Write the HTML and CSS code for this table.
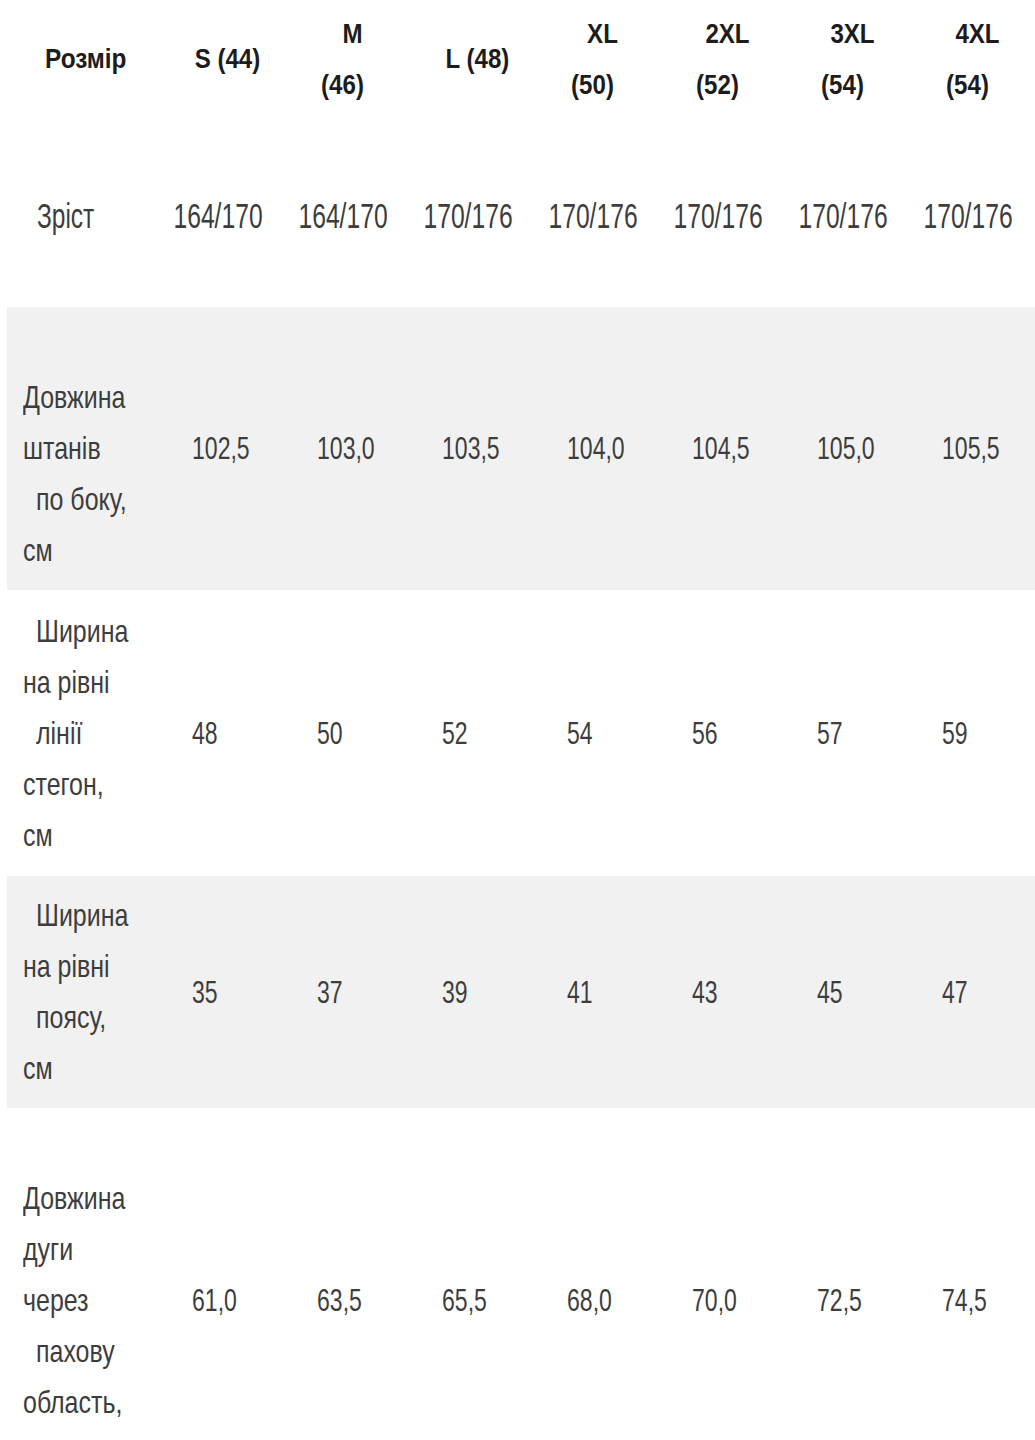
FILE: index.html
```html
<!DOCTYPE html>
<html lang="uk">
<head>
<meta charset="utf-8">
<link rel="stylesheet" href="styles.css">
</head>
<body>
<table class="sizes">
  <colgroup>
    <col class="c-label"><col class="c-val"><col class="c-val"><col class="c-val"><col class="c-val"><col class="c-val"><col class="c-val"><col class="c-last">
  </colgroup>
  <thead>
    <tr class="head">
      <th class="lbl"><span class="ln p-h">Розмір</span></th>
      <th><span class="ln l1">S (44)</span></th>
      <th><span class="ln l1">M</span><span class="ln">(46)</span></th>
      <th><span class="ln l1">L (48)</span></th>
      <th><span class="ln l1">XL</span><span class="ln">(50)</span></th>
      <th><span class="ln l1">2XL</span><span class="ln">(52)</span></th>
      <th><span class="ln l1">3XL</span><span class="ln">(54)</span></th>
      <th><span class="ln l1">4XL</span><span class="ln">(54)</span></th>
    </tr>
  </thead>
  <tbody>
    <tr class="height">
      <td class="lbl"><span class="ln p-z">Зріст</span></td>
      <td class="ctr"><span class="ln">164/170</span></td>
      <td class="ctr"><span class="ln">164/170</span></td>
      <td class="ctr"><span class="ln">170/176</span></td>
      <td class="ctr"><span class="ln">170/176</span></td>
      <td class="ctr"><span class="ln">170/176</span></td>
      <td class="ctr"><span class="ln">170/176</span></td>
      <td class="ctr"><span class="ln">170/176</span></td>
    </tr>
    <tr class="shade">
      <td class="lbl"><span class="ln">&nbsp;</span><span class="ln">Довжина</span><span class="ln">штанів</span><span class="ln ind">по боку,</span><span class="ln">см</span></td>
      <td><span class="ln">102,5</span></td>
      <td><span class="ln">103,0</span></td>
      <td><span class="ln">103,5</span></td>
      <td><span class="ln">104,0</span></td>
      <td><span class="ln">104,5</span></td>
      <td><span class="ln">105,0</span></td>
      <td><span class="ln">105,5</span></td>
    </tr>
    <tr class="tall">
      <td class="lbl"><span class="ln ind">Ширина</span><span class="ln">на рівні</span><span class="ln ind">лінії</span><span class="ln">стегон,</span><span class="ln">см</span></td>
      <td><span class="ln">48</span></td>
      <td><span class="ln">50</span></td>
      <td><span class="ln">52</span></td>
      <td><span class="ln">54</span></td>
      <td><span class="ln">56</span></td>
      <td><span class="ln">57</span></td>
      <td><span class="ln">59</span></td>
    </tr>
    <tr class="shade">
      <td class="lbl"><span class="ln ind">Ширина</span><span class="ln">на рівні</span><span class="ln ind">поясу,</span><span class="ln">см</span></td>
      <td><span class="ln">35</span></td>
      <td><span class="ln">37</span></td>
      <td><span class="ln">39</span></td>
      <td><span class="ln">41</span></td>
      <td><span class="ln">43</span></td>
      <td><span class="ln">45</span></td>
      <td><span class="ln">47</span></td>
    </tr>
    <tr>
      <td class="lbl"><span class="ln">&nbsp;</span><span class="ln">Довжина</span><span class="ln">дуги</span><span class="ln">через</span><span class="ln ind">пахову</span><span class="ln">область,</span><span class="ln">см</span></td>
      <td><span class="ln">61,0</span></td>
      <td><span class="ln">63,5</span></td>
      <td><span class="ln">65,5</span></td>
      <td><span class="ln">68,0</span></td>
      <td><span class="ln">70,0</span></td>
      <td><span class="ln">72,5</span></td>
      <td><span class="ln">74,5</span></td>
    </tr>
  </tbody>
</table>
</body>
</html>
```
FILE: styles.css
```css
html, body {
  margin: 0;
  padding: 0;
  background: #ffffff;
}
body {
  font-family: "Liberation Sans", Arial, sans-serif;
  font-size: 32px;
  color: #3d3d3d;
}
.sizes {
  margin-left: 7px;
  width: 1028px;
  table-layout: fixed;
  border-collapse: collapse;
}
.c-label { width: 147.5px; }
.c-val { width: 125px; }
.c-last { width: 130.5px; }
.sizes th,
.sizes td {
  padding: 14px 0 14px 37.5px;
  line-height: 51px;
  vertical-align: middle;
  text-align: left;
  white-space: nowrap;
}
.ln {
  display: block;
  transform: scaleX(0.72);
  transform-origin: left center;
}
.sizes .lbl {
  padding-left: 16px;
}
.lbl .ln {
  transform: scaleX(0.78);
}
.ind {
  margin-left: 13px;
}

/* header */
.head th {
  padding: 7.5px 0;
  text-align: center;
  font-weight: bold;
  font-size: 28px;
  color: #1c1c1c;
}
.head th:last-child {
  padding-right: 5.5px;
}
.head th .ln {
  transform: scaleX(0.86);
  transform-origin: center center;
}
.head th .l1 {
  transform: translateX(10px) scaleX(0.86);
}
.head th.lbl {
  text-align: left;
  padding-left: 16px;
}
.head th.lbl .ln {
  transform: scaleX(0.87);
  transform-origin: left center;
}
.p-h {
  margin-left: 22px;
}

/* height row */
.height td {
  height: 184px;
  padding: 6px 0 0 0;
  font-size: 35px;
}
.height td.ctr {
  text-align: center;
}
.height td:last-child {
  padding-right: 5.5px;
}
.height td.ctr .ln {
  transform: scaleX(0.705);
  transform-origin: center center;
}
.height td.lbl {
  padding-left: 16px;
}
.height td.lbl .ln {
  transform: scaleX(0.70);
}
.p-z {
  margin-left: 14px;
}

.shade {
  background: #f1f1f1;
}
.tall td {
  padding-top: 15.5px;
  padding-bottom: 15.5px;
}
```
